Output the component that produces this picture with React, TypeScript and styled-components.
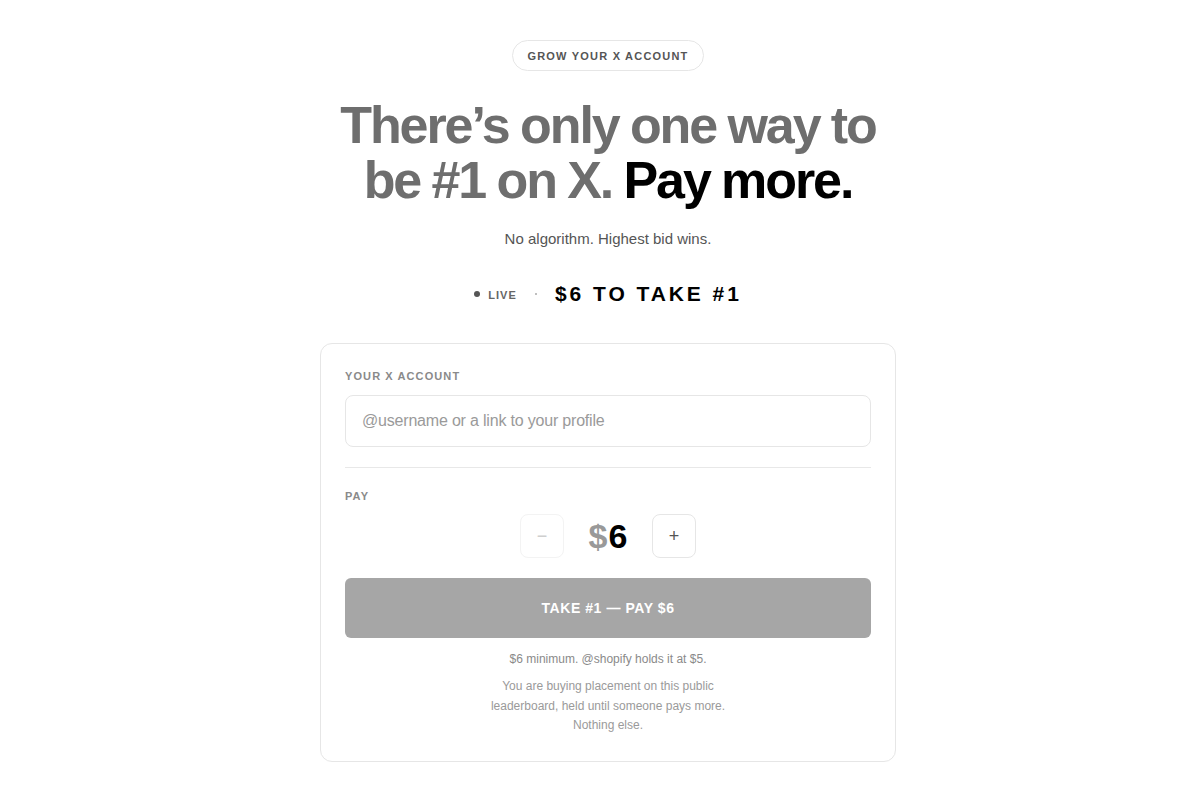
import React, { useState } from "react";
import styled, { createGlobalStyle } from "styled-components";

const GlobalStyle = createGlobalStyle`
  html, body {
    margin: 0;
    padding: 0;
    background: #ffffff;
  }
  body {
    font-family: "Liberation Sans", Arial, sans-serif;
    color: #111;
    -webkit-font-smoothing: antialiased;
  }
  * { box-sizing: border-box; }
`;

const Page = styled.main`
  display: flex;
  flex-direction: column;
  align-items: center;
  padding: 40px 0 38px 16px;
`;

const Badge = styled.div`
  height: 31px;
  padding: 0 14px;
  border: 1px solid #e6e6e6;
  border-radius: 999px;
  display: flex;
  align-items: center;
  font-size: 11px;
  font-weight: 700;
  letter-spacing: 0.11em;
  color: #555;
`;

const Headline = styled.h1`
  margin: 27px 0 0;
  font-size: 52px;
  line-height: 55px;
  font-weight: 700;
  letter-spacing: -0.04em;
  word-spacing: -0.02em;
  text-align: center;
  color: #6e6e6e;
`;

const Strong = styled.span`
  color: #000;
`;

const Subtitle = styled.p`
  margin: 20px 0 0;
  font-size: 15px;
  line-height: 22px;
  color: #555;
`;

const LiveRow = styled.div`
  margin-top: 32px;
  display: flex;
  align-items: center;
  height: 24px;
`;

const LiveDot = styled.span`
  width: 6px;
  height: 6px;
  border-radius: 50%;
  background: #555;
  margin-right: 8px;
`;

const LiveText = styled.span`
  font-size: 11px;
  font-weight: 700;
  letter-spacing: 0.1em;
  color: #666;
  margin-top: 2px;
`;

const Sep = styled.span`
  width: 2px;
  height: 2px;
  border-radius: 50%;
  background: #aaa;
  margin: 0 18px 0 18px;
`;

const Price = styled.span`
  font-size: 21px;
  font-weight: 700;
  letter-spacing: 0.14em;
  color: #000;
`;

const Card = styled.section`
  margin-top: 37px;
  width: 576px;
  border: 1px solid #e6e6e6;
  border-radius: 12px;
  padding: 24px 24px 25px;
  display: flex;
  flex-direction: column;
`;

const Label = styled.div`
  font-size: 11px;
  line-height: 16px;
  font-weight: 700;
  letter-spacing: 0.1em;
  color: #8a8a8a;
`;

const Input = styled.input`
  margin-top: 11px;
  height: 52px;
  width: 100%;
  border: 1px solid #e6e6e6;
  border-radius: 8px;
  padding: 0 16px;
  font-family: inherit;
  font-size: 16px;
  letter-spacing: -0.012em;
  color: #111;
  outline: none;
  &::placeholder {
    color: #9a9a9a;
  }
`;

const Divider = styled.hr`
  margin: 20px 0 20px;
  border: 0;
  height: 1px;
  background: #e8e8e8;
`;

const Stepper = styled.div`
  margin-top: 10px;
  height: 44px;
  display: flex;
  justify-content: center;
  align-items: center;
`;

const StepButton = styled.button<{ $disabled?: boolean }>`
  width: 44px;
  height: 44px;
  border-radius: 8px;
  background: #fff;
  border: 1px solid ${(p) => (p.$disabled ? "#f3f3f3" : "#e6e6e6")};
  color: ${(p) => (p.$disabled ? "#cfcfcf" : "#555")};
  font-family: inherit;
  font-size: 18px;
  line-height: 1;
  display: flex;
  align-items: center;
  justify-content: center;
  cursor: ${(p) => (p.$disabled ? "default" : "pointer")};
  padding: 0;
`;

const Amount = styled.div`
  width: 88px;
  height: 44px;
  display: flex;
  justify-content: center;
  align-items: center;
  font-weight: 700;
  font-size: 34px;
  line-height: 1;
  color: #000;
`;

const Currency = styled.span`
  color: #999;
  margin-right: 1px;
`;

const PayButton = styled.button`
  margin-top: 20px;
  height: 60px;
  width: 100%;
  border: 0;
  border-radius: 6px;
  background: #a6a6a6;
  color: #fff;
  font-family: inherit;
  font-size: 14px;
  font-weight: 700;
  letter-spacing: 0.04em;
  cursor: pointer;
`;

const Note = styled.p`
  margin: 12px 0 0;
  text-align: center;
  font-size: 12px;
  line-height: 18px;
  color: #8a8a8a;
`;

const Fine = styled.p`
  margin: 9px 0 0;
  text-align: center;
  font-size: 12px;
  line-height: 19.5px;
  color: #9a9a9a;
`;

export default function App() {
  const [amount, setAmount] = useState(6);
  const min = 6;
  return (
    <>
      <GlobalStyle />
      <Page>
        <Badge>GROW YOUR X ACCOUNT</Badge>
        <Headline>
          There’s only one way to
          <br />
          be #1 on X. <Strong>Pay more.</Strong>
        </Headline>
        <Subtitle>No algorithm. Highest bid wins.</Subtitle>
        <LiveRow>
          <LiveDot />
          <LiveText>LIVE</LiveText>
          <Sep />
          <Price>$6 TO TAKE #1</Price>
        </LiveRow>
        <Card>
          <Label>YOUR X ACCOUNT</Label>
          <Input placeholder="@username or a link to your profile" />
          <Divider />
          <Label>PAY</Label>
          <Stepper>
            <StepButton
              $disabled={amount <= min}
              onClick={() => setAmount((a) => Math.max(min, a - 1))}
            >
              −
            </StepButton>
            <Amount>
              <Currency>$</Currency>
              {amount}
            </Amount>
            <StepButton onClick={() => setAmount((a) => a + 1)}>+</StepButton>
          </Stepper>
          <PayButton>TAKE #1 — PAY ${amount}</PayButton>
          <Note>$6 minimum. @shopify holds it at $5.</Note>
          <Fine>
            You are buying placement on this public
            <br />
            leaderboard, held until someone pays more.
            <br />
            Nothing else.
          </Fine>
        </Card>
      </Page>
    </>
  );
}
